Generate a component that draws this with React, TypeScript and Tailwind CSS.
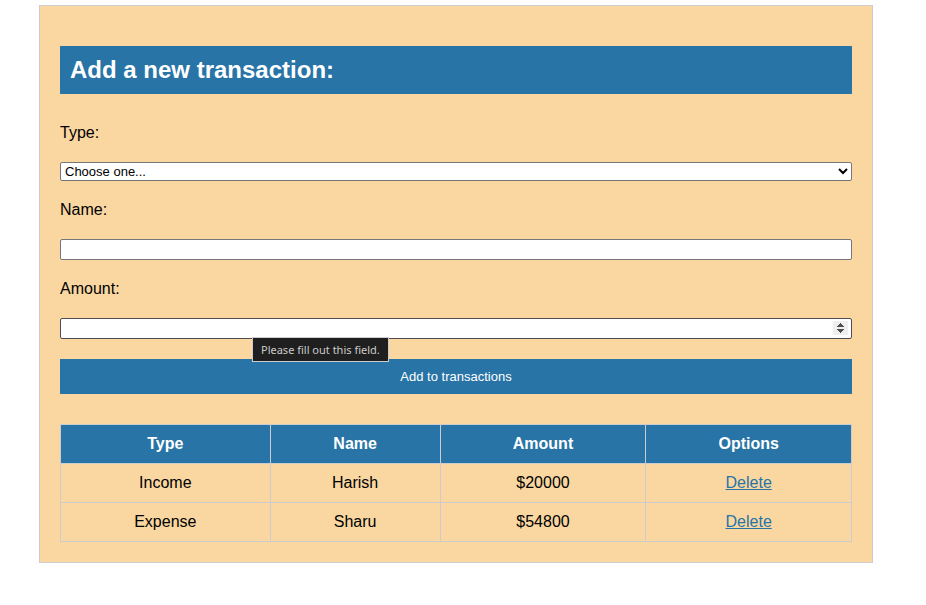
import { useState } from "react";

type Transaction = { id: number; type: string; name: string; amount: number };

const initial: Transaction[] = [
  { id: 1, type: "Income", name: "Harish", amount: 20000 },
  { id: 2, type: "Expense", name: "Sharu", amount: 54800 },
];

const field =
  "block w-full rounded-xs border bg-white text-[13px] text-black";
const cell = "border border-[#cccccc] p-[10px] text-center";

export default function App() {
  const [rows, setRows] = useState(initial);
  const [type, setType] = useState("");
  const [name, setName] = useState("");
  const [amount, setAmount] = useState("");

  const add = () => {
    if (!type || !name || !amount) return;
    setRows([...rows, { id: Date.now(), type, name, amount: Number(amount) }]);
    setType("");
    setName("");
    setAmount("");
  };

  return (
    <main className="mt-[5px] mr-[53px] ml-[39px] border border-[#cccccc] bg-[#fad7a0] p-5 font-['Liberation_Sans',Arial,sans-serif] text-base leading-[18px] text-black">
      <form
        className="flex flex-col gap-5 pt-5"
        onSubmit={(e) => {
          e.preventDefault();
          add();
        }}
      >
        <h2 className="mb-[10px] bg-[#2874a6] p-[10px] text-2xl leading-7 font-bold text-white">
          Add a new transaction:
        </h2>
        <label htmlFor="type">Type:</label>
        <select
          id="type"
          value={type}
          onChange={(e) => setType(e.target.value)}
          className={`${field} h-[19px] border-[#767676]`}
        >
          <option value="">Choose one...</option>
          <option value="Income">Income</option>
          <option value="Expense">Expense</option>
        </select>
        <label htmlFor="name">Name:</label>
        <input
          id="name"
          type="text"
          value={name}
          onChange={(e) => setName(e.target.value)}
          className={`${field} h-[21px] border-[#767676] px-0.5`}
        />
        <label htmlFor="amount">Amount:</label>
        <div className="relative">
          <input
            id="amount"
            type="number"
            value={amount}
            onChange={(e) => setAmount(e.target.value)}
            className={`${field} h-[21px] border-[#4f4f4f] px-0.5 [&::-webkit-inner-spin-button]:opacity-0`}
          />
          <svg
            aria-hidden="true"
            viewBox="0 0 15 14"
            className="pointer-events-none absolute top-[3px] right-1 h-[14px] w-[15px]"
          >
            <rect width="15" height="14" fill="#efefef" />
            <path d="M7 2h1v1h1v1h1v1h1v1H4V5h1V4h1V3h1z" fill="#4f4f4f" />
            <path d="M4 8h7v1h-1v1H9v1H8v1H7v-1H6v-1H5V9H4z" fill="#4f4f4f" />
          </svg>
          <div
            role="tooltip"
            className="absolute top-[19px] left-48 z-10 border border-[#cccccc] bg-[#1f1f1f] px-2 py-[3px] font-['Noto_Sans','Open_Sans',sans-serif] text-[11px] leading-[17px] whitespace-nowrap text-[#cccccc]"
          >
            Please fill out this field.
          </div>
        </div>
        <button
          type="submit"
          className="w-full bg-[#2874a6] p-[10px] text-[13px] leading-[15px] text-white"
        >
          Add to transactions
        </button>
      </form>

      <table className="mt-[30px] w-full table-fixed border-collapse">
        <thead>
          <tr className="bg-[#2874a6] text-white">
            <th className={`${cell} w-[26.5%]`}>Type</th>
            <th className={`${cell} w-[21.5%]`}>Name</th>
            <th className={`${cell} w-[26%]`}>Amount</th>
            <th className={`${cell} w-[26%]`}>Options</th>
          </tr>
        </thead>
        <tbody>
          {rows.map((row) => (
            <tr key={row.id}>
              <td className={cell}>{row.type}</td>
              <td className={cell}>{row.name}</td>
              <td className={cell}>${row.amount}</td>
              <td className={cell}>
                <a
                  href="#"
                  className="text-[#2874a6] underline"
                  onClick={(e) => {
                    e.preventDefault();
                    setRows(rows.filter((r) => r.id !== row.id));
                  }}
                >
                  Delete
                </a>
              </td>
            </tr>
          ))}
        </tbody>
      </table>
    </main>
  );
}
